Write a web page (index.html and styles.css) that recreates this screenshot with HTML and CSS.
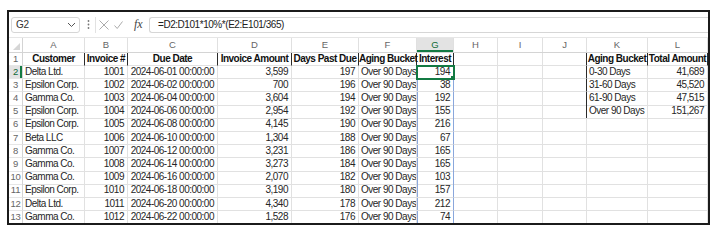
FILE: index.html
```html
<!DOCTYPE html>
<html lang="en">
<head>
  <meta charset="UTF-8">
  <title>Aging report</title>
  <link rel="stylesheet" href="styles.css">
</head>
<body>
  <div class="frame">
    <div class="formula-bar">
      <div class="name-box">
        <span>G2</span>
        <svg class="chev" width="9" height="6" viewBox="0 0 9 6"><polyline points="1,1 4.5,4.5 8,1" fill="none" stroke="#555" stroke-width="1"/></svg>
      </div>
      <svg class="dots" width="3" height="11" viewBox="0 0 3 11"><circle cx="1.5" cy="2" r="0.9" fill="#777"/><circle cx="1.5" cy="5.5" r="0.9" fill="#777"/><circle cx="1.5" cy="9" r="0.9" fill="#777"/></svg>
      <div class="fx-group">
        <svg width="10" height="10" viewBox="0 0 10 10"><path d="M0.5 0.5 L9.5 9.5 M9.5 0.5 L0.5 9.5" stroke="#ababab" stroke-width="1" fill="none"/></svg>
        <svg width="9" height="8" viewBox="0 0 9 8"><polyline points="0.5,4.5 3.2,7.5 8.5,0.5" fill="none" stroke="#ababab" stroke-width="1"/></svg>
        <i class="fx">fx</i>
      </div>
      <div class="formula-input">=D2:D101*10%*(E2:E101/365)</div>
    </div>

    <div class="sheet">
      <div class="row col-head">
        <div class="corner"><svg width="7" height="7" viewBox="0 0 7 7"><polygon points="7,0 7,7 0,7" fill="#d6d6d6"/></svg></div>
        <div>A</div><div>B</div><div>C</div><div>D</div><div>E</div><div>F</div><div class="sel">G</div><div>H</div><div>I</div><div>J</div><div>K</div><div>L</div>
      </div>
      <div class="row">
        <div class="rh">1</div>
        <div class="c hd">Customer</div><div class="c hd">Invoice #</div><div class="c hd">Due Date</div><div class="c hd">Invoice Amount</div><div class="c hd">Days Past Due</div><div class="c hd">Aging Bucket</div><div class="c hd">Interest</div>
        <div class="c"></div><div class="c"></div><div class="c jb"></div><div class="c hd">Aging Bucket</div><div class="c hd">Total Amount</div>
      </div>
      <div class="row">
        <div class="rh on">2</div>
        <div class="c">Delta Ltd.</div><div class="c r">1001</div><div class="c r">2024-06-01 00:00:00</div><div class="c r">3,599</div><div class="c r">197</div><div class="c">Over 90 Days</div><div class="c r act">194</div>
        <div class="c"></div><div class="c"></div><div class="c jb"></div><div class="c">0-30 Days</div><div class="c r">41,689</div>
      </div>
      <div class="row">
        <div class="rh">3</div>
        <div class="c">Epsilon Corp.</div><div class="c r">1002</div><div class="c r">2024-06-02 00:00:00</div><div class="c r">700</div><div class="c r">196</div><div class="c">Over 90 Days</div><div class="c r sp">38</div>
        <div class="c"></div><div class="c"></div><div class="c jb"></div><div class="c">31-60 Days</div><div class="c r">45,520</div>
      </div>
      <div class="row">
        <div class="rh">4</div>
        <div class="c">Gamma Co.</div><div class="c r">1003</div><div class="c r">2024-06-04 00:00:00</div><div class="c r">3,604</div><div class="c r">194</div><div class="c">Over 90 Days</div><div class="c r sp">192</div>
        <div class="c"></div><div class="c"></div><div class="c jb"></div><div class="c">61-90 Days</div><div class="c r">47,515</div>
      </div>
      <div class="row">
        <div class="rh">5</div>
        <div class="c">Epsilon Corp.</div><div class="c r">1004</div><div class="c r">2024-06-06 00:00:00</div><div class="c r">2,954</div><div class="c r">192</div><div class="c">Over 90 Days</div><div class="c r sp">155</div>
        <div class="c"></div><div class="c"></div><div class="c jb"></div><div class="c">Over 90 Days</div><div class="c r">151,267</div>
      </div>
      <div class="row">
        <div class="rh">6</div>
        <div class="c">Epsilon Corp.</div><div class="c r">1005</div><div class="c r">2024-06-08 00:00:00</div><div class="c r">4,145</div><div class="c r">190</div><div class="c">Over 90 Days</div><div class="c r sp">216</div>
        <div class="c"></div><div class="c"></div><div class="c"></div><div class="c"></div><div class="c"></div>
      </div>
      <div class="row">
        <div class="rh">7</div>
        <div class="c">Beta LLC</div><div class="c r">1006</div><div class="c r">2024-06-10 00:00:00</div><div class="c r">1,304</div><div class="c r">188</div><div class="c">Over 90 Days</div><div class="c r sp">67</div>
        <div class="c"></div><div class="c"></div><div class="c"></div><div class="c"></div><div class="c"></div>
      </div>
      <div class="row">
        <div class="rh">8</div>
        <div class="c">Gamma Co.</div><div class="c r">1007</div><div class="c r">2024-06-12 00:00:00</div><div class="c r">3,231</div><div class="c r">186</div><div class="c">Over 90 Days</div><div class="c r sp">165</div>
        <div class="c"></div><div class="c"></div><div class="c"></div><div class="c"></div><div class="c"></div>
      </div>
      <div class="row">
        <div class="rh">9</div>
        <div class="c">Gamma Co.</div><div class="c r">1008</div><div class="c r">2024-06-14 00:00:00</div><div class="c r">3,273</div><div class="c r">184</div><div class="c">Over 90 Days</div><div class="c r sp">165</div>
        <div class="c"></div><div class="c"></div><div class="c"></div><div class="c"></div><div class="c"></div>
      </div>
      <div class="row">
        <div class="rh">10</div>
        <div class="c">Gamma Co.</div><div class="c r">1009</div><div class="c r">2024-06-16 00:00:00</div><div class="c r">2,070</div><div class="c r">182</div><div class="c">Over 90 Days</div><div class="c r sp">103</div>
        <div class="c"></div><div class="c"></div><div class="c"></div><div class="c"></div><div class="c"></div>
      </div>
      <div class="row">
        <div class="rh">11</div>
        <div class="c">Epsilon Corp.</div><div class="c r">1010</div><div class="c r">2024-06-18 00:00:00</div><div class="c r">3,190</div><div class="c r">180</div><div class="c">Over 90 Days</div><div class="c r sp">157</div>
        <div class="c"></div><div class="c"></div><div class="c"></div><div class="c"></div><div class="c"></div>
      </div>
      <div class="row">
        <div class="rh">12</div>
        <div class="c">Delta Ltd.</div><div class="c r">1011</div><div class="c r">2024-06-20 00:00:00</div><div class="c r">4,340</div><div class="c r">178</div><div class="c">Over 90 Days</div><div class="c r sp">212</div>
        <div class="c"></div><div class="c"></div><div class="c"></div><div class="c"></div><div class="c"></div>
      </div>
      <div class="row">
        <div class="rh">13</div>
        <div class="c">Gamma Co.</div><div class="c r">1012</div><div class="c r">2024-06-22 00:00:00</div><div class="c r">1,528</div><div class="c r">176</div><div class="c">Over 90 Days</div><div class="c r sp">74</div>
        <div class="c"></div><div class="c"></div><div class="c"></div><div class="c"></div><div class="c"></div>
      </div>
    </div>
  </div>
</body>
</html>
```

FILE: styles.css
```css
body {
  margin: 0;
  background: #fff;
  font-family: "Liberation Sans", Arial, sans-serif;
  color: #1f1f1f;
}
.frame {
  margin: 10px 0 0 7px;
  width: 703px;
  height: 215px;
  border: 2px solid #1b1b1b;
  box-sizing: border-box;
  overflow: hidden;
  background: #fff;
}
.formula-bar {
  display: flex;
  align-items: center;
  height: 25px;
  padding-left: 2px;
  border-bottom: 1px solid #e6e6e6;
}
.name-box {
  display: flex;
  align-items: center;
  justify-content: space-between;
  flex-shrink: 0;
  width: 69px;
  height: 16px;
  box-sizing: border-box;
  padding: 0 3px 0 4px;
  border: 1px solid #d6d6d6;
  border-radius: 3px;
  font-size: 10px;
  letter-spacing: -0.3px;
  color: #333;
}
.dots {
  flex-shrink: 0;
  margin-left: 7px;
}
.fx-group {
  display: flex;
  align-items: center;
  flex-shrink: 0;
  width: 52px;
  height: 16px;
  box-sizing: border-box;
  margin-left: 5px;
  padding-left: 3px;
  border-left: 1px solid #e2e2e2;
  gap: 5px;
}
.fx {
  font-family: "Liberation Serif", serif;
  font-size: 12px;
  color: #444;
  margin-left: 6px;
}
.formula-input {
  flex: 1;
  height: 16px;
  box-sizing: border-box;
  margin-left: 2px;
  padding-left: 8px;
  border: 1px solid #d6d6d6;
  border-right: none;
  border-radius: 3px 0 0 3px;
  font-size: 10px;
  letter-spacing: -0.45px;
  line-height: 14px;
  color: #222;
}
.sheet {
  display: flex;
  flex-direction: column;
}
.row {
  display: grid;
  grid-template-columns: 14px 62px 43px 90px 74px 67px 58px 37px 44px 45px 44px 61px 60px;
  height: 13.2px;
  flex-shrink: 0;
}
.col-head {
  height: 14.5px;
  border-bottom: 1px solid #d4d4d4;
  box-sizing: border-box;
}
.col-head div {
  font-size: 9.5px;
  line-height: 13.5px;
  text-align: center;
  color: #666;
  border-right: 1px solid #e0e0e0;
}
.col-head .corner {
  display: flex;
  align-items: flex-end;
  justify-content: flex-end;
  padding: 0 2px 2px 0;
  border-right: 1px solid #d4d4d4;
}
.col-head .sel {
  background: #e3e3e3;
  color: #0f6b39;
  box-shadow: inset 0 -2px 0 #137a43;
}
.rh {
  font-size: 9.5px;
  letter-spacing: -0.3px;
  line-height: 12.5px;
  text-align: center;
  color: #666;
  border-right: 1px solid #d4d4d4;
  border-bottom: 1px solid #e6e6e6;
  box-sizing: border-box;
  white-space: nowrap;
}
.rh.on {
  background: #e3e3e3;
  color: #0f6b39;
  box-shadow: inset -2px 0 0 #137a43;
}
.c {
  font-size: 10px;
  letter-spacing: -0.5px;
  line-height: 12.5px;
  padding: 0 2px;
  border-right: 1px solid #e1e1e1;
  border-bottom: 1px solid #e1e1e1;
  box-sizing: border-box;
  white-space: nowrap;
  overflow: hidden;
  color: #262626;
}
.r {
  text-align: right;
  padding-right: 3px;
}
.hd {
  font-weight: 700;
  text-align: center;
  color: #111;
  padding: 0;
  border-right-color: #2a2a2a;
  overflow: visible;
}
.jb {
  border-right-color: #2a2a2a;
}
.sp {
  border-right-color: #8aa7dc;
  box-shadow: inset 1px 0 0 #8aa7dc;
}
.act {
  position: relative;
  outline: 2px solid #137a43;
  outline-offset: -1px;
  z-index: 1;
}
.act::after {
  content: "";
  position: absolute;
  right: -3px;
  bottom: -3px;
  width: 4px;
  height: 4px;
  background: #137a43;
  border: 1px solid #fff;
}
```
